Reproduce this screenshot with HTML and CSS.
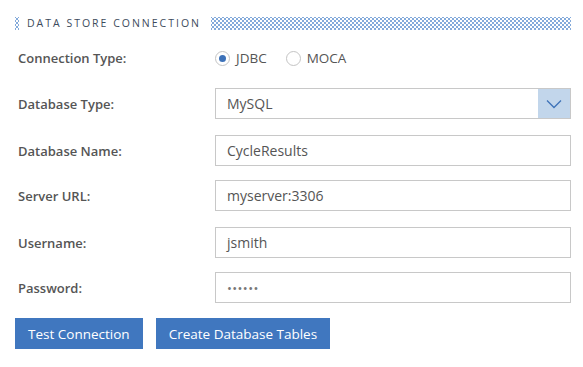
FILE: index.html
```html
<!DOCTYPE html>
<html lang="en">
<head>
  <meta charset="UTF-8" />
  <title>Data Store Connection</title>
  <link rel="stylesheet" href="styles.css">
</head>
<body>

  <!-- HEADER -->
  <div class="seccion">
    <span class="puntos puntos-izq"></span>
    <span class="titulo">DATA STORE CONNECTION</span>
    <span class="puntos puntos-der"></span>
  </div>

  <!-- FORM -->
  <div class="formulario">
    <div class="fila fila-radio">
      <label class="etiqueta">Connection Type:</label>
      <div class="radios">
        <span class="radio activo"></span><span class="radio-texto">JDBC</span>
        <span class="radio"></span><span class="radio-texto">MOCA</span>
      </div>
    </div>

    <div class="fila">
      <label class="etiqueta">Database Type:</label>
      <div class="campo select">
        <span class="valor">MySQL</span>
        <span class="flecha">
          <svg width="16" height="10" viewBox="0 0 16 10"><path d="M1 1.5 L8 8.5 L15 1.5" fill="none" stroke="#3f73b8" stroke-width="1.3"/></svg>
        </span>
      </div>
    </div>

    <div class="fila">
      <label class="etiqueta">Database Name:</label>
      <div class="campo"><span class="valor">CycleResults</span></div>
    </div>

    <div class="fila">
      <label class="etiqueta">Server URL:</label>
      <div class="campo"><span class="valor">myserver:3306</span></div>
    </div>

    <div class="fila">
      <label class="etiqueta">Username:</label>
      <div class="campo"><span class="valor">jsmith</span></div>
    </div>

    <div class="fila">
      <label class="etiqueta">Password:</label>
      <div class="campo"><span class="valor clave">&bull;&bull;&bull;&bull;&bull;&bull;</span></div>
    </div>
  </div>

  <!-- BUTTONS -->
  <div class="botones">
    <button class="boton">Test Connection</button>
    <button class="boton">Create Database Tables</button>
  </div>

</body>
</html>
```
FILE: styles.css
```css
* {
  box-sizing: border-box;
  margin: 0;
  padding: 0;
}

body {
  font-family: 'Open Sans', sans-serif;
  background: #fff;
  color: #555;
  padding: 16px 12px 0 15px;
}

.seccion {
  display: flex;
  align-items: center;
  height: 14px;
}

.puntos {
  height: 13px;
  background-image: radial-gradient(circle, #3f7bc6 0.6px, transparent 0.9px);
  background-size: 4px 4px;
  background-position: 0 0;
  position: relative;
}

.puntos::after {
  content: "";
  position: absolute;
  inset: 0;
  background-image: radial-gradient(circle, #3f7bc6 0.6px, transparent 0.9px);
  background-size: 4px 4px;
  background-position: 2px 2px;
}

.puntos-izq {
  width: 4px;
}

.puntos-der {
  flex: 1;
  margin-left: 10px;
}

.titulo {
  font-size: 10.5px;
  letter-spacing: 2px;
  color: #3d4b5c;
  margin-left: 8px;
}

.formulario {
  margin-top: 15px;
}

.fila {
  display: flex;
  align-items: center;
  height: 31px;
  margin-bottom: 15px;
}

.fila:nth-child(2),
.fila:nth-child(4) {
  margin-bottom: 16px;
}

.fila:nth-child(3),
.fila:nth-child(5) {
  margin-bottom: 14px;
}

.fila-radio {
  height: 26px;
  margin-bottom: 17px;
}

.etiqueta {
  width: 200px;
  padding-left: 3px;
  font-size: 13px;
  font-weight: 600;
  color: #555;
}

.radios {
  display: flex;
  align-items: center;
}

.radio {
  width: 15px;
  height: 15px;
  border: 1px solid #c4c4c4;
  border-radius: 50%;
  position: relative;
}

.radio.activo::after {
  content: "";
  position: absolute;
  left: 3px;
  top: 3px;
  width: 7px;
  height: 7px;
  border-radius: 50%;
  background: #3d72b9;
}

.radio-texto {
  font-size: 13.5px;
  color: #555;
  margin-left: 6px;
  margin-right: 19px;
}

.campo {
  flex: 1;
  height: 31px;
  border: 1px solid #c8c8c8;
  display: flex;
  align-items: center;
  padding-left: 11px;
}

.valor {
  font-size: 14px;
  color: #555;
}

.clave {
  font-size: 13px;
  letter-spacing: 0.4px;
  color: #777;
}

.select {
  padding-right: 0;
}

.select .valor {
  flex: 1;
}

.flecha {
  width: 32px;
  height: 29px;
  background: #c2d6eb;
  display: flex;
  align-items: center;
  justify-content: center;
}

.botones {
  display: flex;
  gap: 13px;
}

.boton {
  height: 31px;
  padding: 0 13px;
  border: none;
  background: #4077bf;
  color: #fff;
  font-family: 'Open Sans', sans-serif;
  font-size: 13.5px;
  cursor: pointer;
}
```
